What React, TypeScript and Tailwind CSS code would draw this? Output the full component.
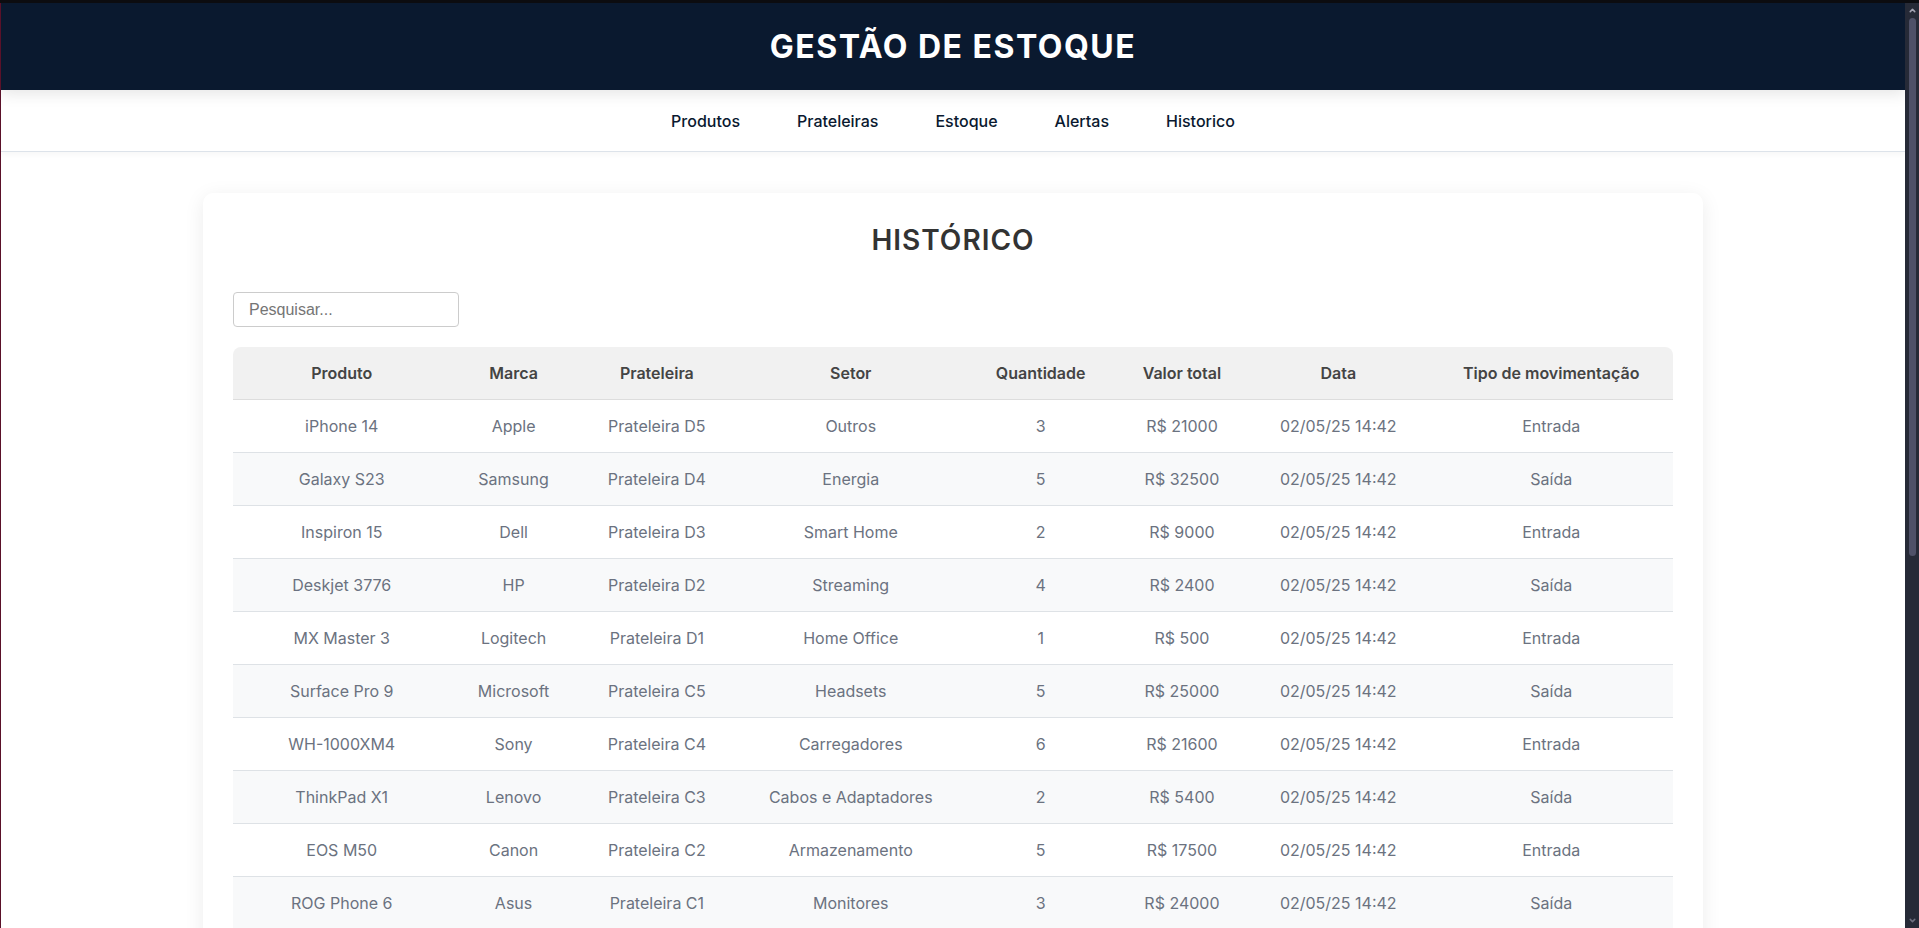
import { ChevronUp, ChevronDown } from 'lucide-react';

const rows = [
  { produto: 'iPhone 14', marca: 'Apple', prateleira: 'Prateleira D5', setor: 'Outros', qtd: 3, valor: 21000, tipo: 'Entrada' },
  { produto: 'Galaxy S23', marca: 'Samsung', prateleira: 'Prateleira D4', setor: 'Energia', qtd: 5, valor: 32500, tipo: 'Saída' },
  { produto: 'Inspiron 15', marca: 'Dell', prateleira: 'Prateleira D3', setor: 'Smart Home', qtd: 2, valor: 9000, tipo: 'Entrada' },
  { produto: 'Deskjet 3776', marca: 'HP', prateleira: 'Prateleira D2', setor: 'Streaming', qtd: 4, valor: 2400, tipo: 'Saída' },
  { produto: 'MX Master 3', marca: 'Logitech', prateleira: 'Prateleira D1', setor: 'Home Office', qtd: 1, valor: 500, tipo: 'Entrada' },
  { produto: 'Surface Pro 9', marca: 'Microsoft', prateleira: 'Prateleira C5', setor: 'Headsets', qtd: 5, valor: 25000, tipo: 'Saída' },
  { produto: 'WH-1000XM4', marca: 'Sony', prateleira: 'Prateleira C4', setor: 'Carregadores', qtd: 6, valor: 21600, tipo: 'Entrada' },
  { produto: 'ThinkPad X1', marca: 'Lenovo', prateleira: 'Prateleira C3', setor: 'Cabos e Adaptadores', qtd: 2, valor: 5400, tipo: 'Saída' },
  { produto: 'EOS M50', marca: 'Canon', prateleira: 'Prateleira C2', setor: 'Armazenamento', qtd: 5, valor: 17500, tipo: 'Entrada' },
  { produto: 'ROG Phone 6', marca: 'Asus', prateleira: 'Prateleira C1', setor: 'Monitores', qtd: 3, valor: 24000, tipo: 'Saída' },
  { produto: 'Pixel 7', marca: 'Google', prateleira: 'Prateleira B5', setor: 'Acessórios', qtd: 4, valor: 16000, tipo: 'Entrada' },
  { produto: 'Kindle', marca: 'Amazon', prateleira: 'Prateleira B4', setor: 'Leitores', qtd: 2, valor: 1200, tipo: 'Saída' },
];

const columns = [
  { label: 'Produto', w: 'w-[217px]' },
  { label: 'Marca', w: 'w-[126px]' },
  { label: 'Prateleira', w: 'w-[160px]' },
  { label: 'Setor', w: 'w-[227px]' },
  { label: 'Quantidade', w: 'w-[152px]' },
  { label: 'Valor total', w: 'w-[130px]' },
  { label: 'Data', w: 'w-[182px]' },
  { label: 'Tipo de movimentação', w: 'w-[243px]' },
];

export default function App() {
  return (
    <div className="h-screen flex flex-col overflow-hidden bg-white">
      <div className="h-[3px] shrink-0 bg-[#0c0c10]" />
      <div className="flex flex-1 min-h-0">
        <div className="w-px shrink-0 bg-[#5a1129]" />

        <div className="flex-1 min-w-0 overflow-hidden font-['Inter',sans-serif]">
          {/* Header */}
          <header className="relative z-10 h-[87px] bg-[#0a192f] flex items-center justify-center shadow-[0_4px_14px_rgba(0,0,0,0.10)]">
            <h1 className="text-white text-[32px] font-bold tracking-[1.5px] leading-none">GESTÃO DE ESTOQUE</h1>
          </header>

          {/* Nav */}
          <nav className="h-[62px] bg-white border-b border-[#dde3ea] flex items-center justify-center gap-[57px] shadow-[0_2px_6px_rgba(0,0,0,0.04)]">
            {['Produtos', 'Prateleiras', 'Estoque', 'Alertas', 'Historico'].map((item) => (
              <a key={item} href="#" className="text-[16px] font-medium text-[#0a192f]">
                {item}
              </a>
            ))}
          </nav>

          {/* Content */}
          <main className="pt-[41px]">
            <div className="mx-auto w-[1500px] bg-white rounded-[10px] shadow-[0_4px_20px_rgba(0,0,0,0.08)] px-[30px] pt-[30px] pb-[30px]">
              <h2 className="text-center text-[28px] leading-[34px] font-semibold text-[#333333] tracking-[1px]">HISTÓRICO</h2>

              <input
                type="text"
                placeholder="Pesquisar..."
                className="mt-[35px] block w-[226px] h-[35px] border border-[#cccccc] rounded-[4px] px-[15px] text-[16px] font-['Liberation_Sans',Arial,sans-serif] text-[#333] placeholder:text-[#757575] outline-none"
              />

              <table className="mt-[20px] w-full table-fixed border-separate border-spacing-0">
                <thead>
                  <tr className="bg-[#f1f1f1]">
                    {columns.map((c, i) => (
                      <th
                        key={c.label}
                        className={`${c.w} py-[15px] leading-[22px] text-[16px] font-semibold text-[#444444] text-center border-b border-[#dddddd] ${i === 0 ? 'rounded-tl-[8px]' : ''} ${i === columns.length - 1 ? 'rounded-tr-[8px]' : ''}`}
                      >
                        {c.label}
                      </th>
                    ))}
                  </tr>
                </thead>
                <tbody>
                  {rows.map((r, i) => (
                    <tr key={r.produto} className={i % 2 === 1 ? 'bg-[#f8f9fa]' : 'bg-white'}>
                      {[r.produto, r.marca, r.prateleira, r.setor, String(r.qtd), `R$ ${r.valor}`, '02/05/25 14:42', r.tipo].map((v, j) => (
                        <td key={j} className="py-[15px] leading-[22px] text-[16px] text-[#6b7280] text-center border-b border-[#dee2e6]">
                          {v}
                        </td>
                      ))}
                    </tr>
                  ))}
                </tbody>
              </table>
            </div>
          </main>
        </div>

        {/* Scrollbar */}
        <div className="w-[14px] shrink-0 bg-[#262a37] flex flex-col items-center">
          <ChevronUp className="mt-[3px] h-[9px] w-[9px] text-[#a3a3b2]" strokeWidth={4} />
          <div className="mt-[3px] ml-[1px] w-[7px] h-[538px] rounded-full bg-[#4f5168]" />
          <div className="flex-1" />
          <ChevronDown className="mb-[3px] h-[9px] w-[9px] text-[#6f7080]" strokeWidth={4} />
        </div>
      </div>
    </div>
  );
}
